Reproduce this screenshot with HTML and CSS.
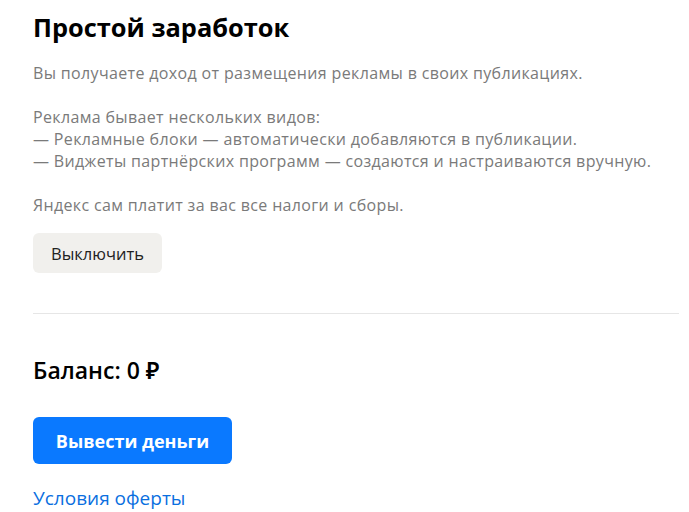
FILE: index.html
```html
<!DOCTYPE html>
<html lang="ru">
<head>
	<meta charset="UTF-8">
	<title>Простой заработок</title>
	<link rel="stylesheet" href="styles.css">
</head>
<body>
	<div class="page">
		<h1 class="title">Простой заработок</h1>
		<div class="about">
			<p>Вы получаете доход от размещения рекламы в своих публикациях.</p>
			<p>Реклама бывает нескольких видов:<br>
			— Рекламные блоки — автоматически добавляются в публикации.<br>
			— Виджеты партнёрских программ — создаются и настраиваются вручную.</p>
			<p>Яндекс сам платит за вас все налоги и сборы.</p>
		</div>
		<button class="btn btn-gray">Выключить</button>
		<div class="divider"></div>
		<div class="balance">Баланс: 0 ₽</div>
		<button class="btn btn-blue">Вывести деньги</button>
		<a href="javascript:;" class="offer">Условия оферты</a>
	</div>
</body>
</html>
```

FILE: styles.css
```css
	body{
		margin:0;
		background:#fff;
		font-family:"Open Sans","Noto Sans",sans-serif;
	}
	.page{
		display:flex;
		flex-direction:column;
		align-items:flex-start;
		padding:11px 10px 0 33px;
	}
	.title{
		margin:0;
		font-size:25.4px;
		line-height:32px;
		font-weight:700;
		color:#000;
	}
	.about{
		margin-top:19px;
		font-size:16px;
		letter-spacing:.35px;
		line-height:22px;
		color:#7a7a7a;
	}
	.about p{
		margin:0 0 22px;
	}
	.about p:last-child{ margin-bottom:0;}
	.btn{
		border:none;
		cursor:pointer;
		font-family:inherit;
	}
	.btn-gray{
		margin-top:17px;
		height:40px;
		padding:0 18px;
		border-radius:6px;
		background:#f1f0ed;
		color:#222;
		font-size:16.5px;
	}
	.divider{
		align-self:stretch;
		height:1px;
		margin-top:40px;
		background:#e6e6e6;
	}
	.balance{
		margin-top:41px;
		font-size:23px;
		line-height:30px;
		font-weight:600;
		color:#000;
	}
	.btn-blue{
		margin-top:32px;
		width:199px;
		height:47px;
		border-radius:6px;
		background:#0a79ff;
		color:#fff;
		font-size:18px;
		font-weight:700;
	}
	.offer{
		margin-top:22px;
		font-size:19px;
		line-height:24px;
		color:#0a6fe0;
		text-decoration:none;
	}
```
